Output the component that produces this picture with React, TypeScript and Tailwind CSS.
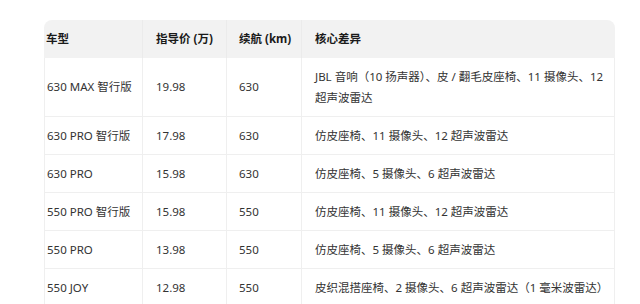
import React from "react";

interface Row {
  model: string;
  price: string;
  range: string;
  diff: string;
}

const rows: Row[] = [
  { model: "630 MAX 智行版", price: "19.98", range: "630", diff: "JBL 音响（10 扬声器）、皮 / 翻毛皮座椅、11 摄像头、12 超声波雷达" },
  { model: "630 PRO 智行版", price: "17.98", range: "630", diff: "仿皮座椅、11 摄像头、12 超声波雷达" },
  { model: "630 PRO", price: "15.98", range: "630", diff: "仿皮座椅、5 摄像头、6 超声波雷达" },
  { model: "550 PRO 智行版", price: "15.98", range: "550", diff: "仿皮座椅、11 摄像头、12 超声波雷达" },
  { model: "550 PRO", price: "13.98", range: "550", diff: "仿皮座椅、5 摄像头、6 超声波雷达" },
  { model: "550 JOY", price: "12.98", range: "550", diff: "皮织混搭座椅、2 摄像头、6 超声波雷达（1 毫米波雷达）" },
];

export default function App() {
  return (
    <div
      className="w-[640px] h-[304px] overflow-hidden bg-white pt-5 pl-[44px]"
      style={{ fontFamily: '"Noto Sans", "Noto Sans CJK SC", sans-serif' }}
    >
      <table className="w-[571px] table-fixed border-separate border-spacing-0 text-[11.5px] text-[#333]">
        <colgroup>
          <col className="w-[99px]" />
          <col className="w-[84px]" />
          <col className="w-[75px]" />
          <col />
        </colgroup>
        <thead>
          <tr className="h-[38px] bg-[#f2f2f2] text-left font-bold text-[#1a1a1a] whitespace-nowrap">
            <th className="rounded-tl-lg pl-[2px] border-r border-[#ebebeb]">车型</th>
            <th className="px-[13px] border-r border-[#ebebeb]">指导价 (万)</th>
            <th className="px-3 border-r border-[#ebebeb]">续航 (km)</th>
            <th className="rounded-tr-lg px-[13px]">核心差异</th>
          </tr>
        </thead>
        <tbody>
          {rows.map((r, i) => (
            <tr key={i} className={i === 0 ? "h-[59px]" : "h-[38px]"}>
              <td className="pl-[2px] whitespace-nowrap border-l border-b border-r border-[#efefef]">{r.model}</td>
              <td className="px-[13px] border-b border-r border-[#efefef]">{r.price}</td>
              <td className="px-3 border-b border-r border-[#efefef]">{r.range}</td>
              <td className="pl-[13px] pr-2 border-b border-r border-[#efefef] leading-[21px]">{r.diff}</td>
            </tr>
          ))}
        </tbody>
      </table>
    </div>
  );
}
